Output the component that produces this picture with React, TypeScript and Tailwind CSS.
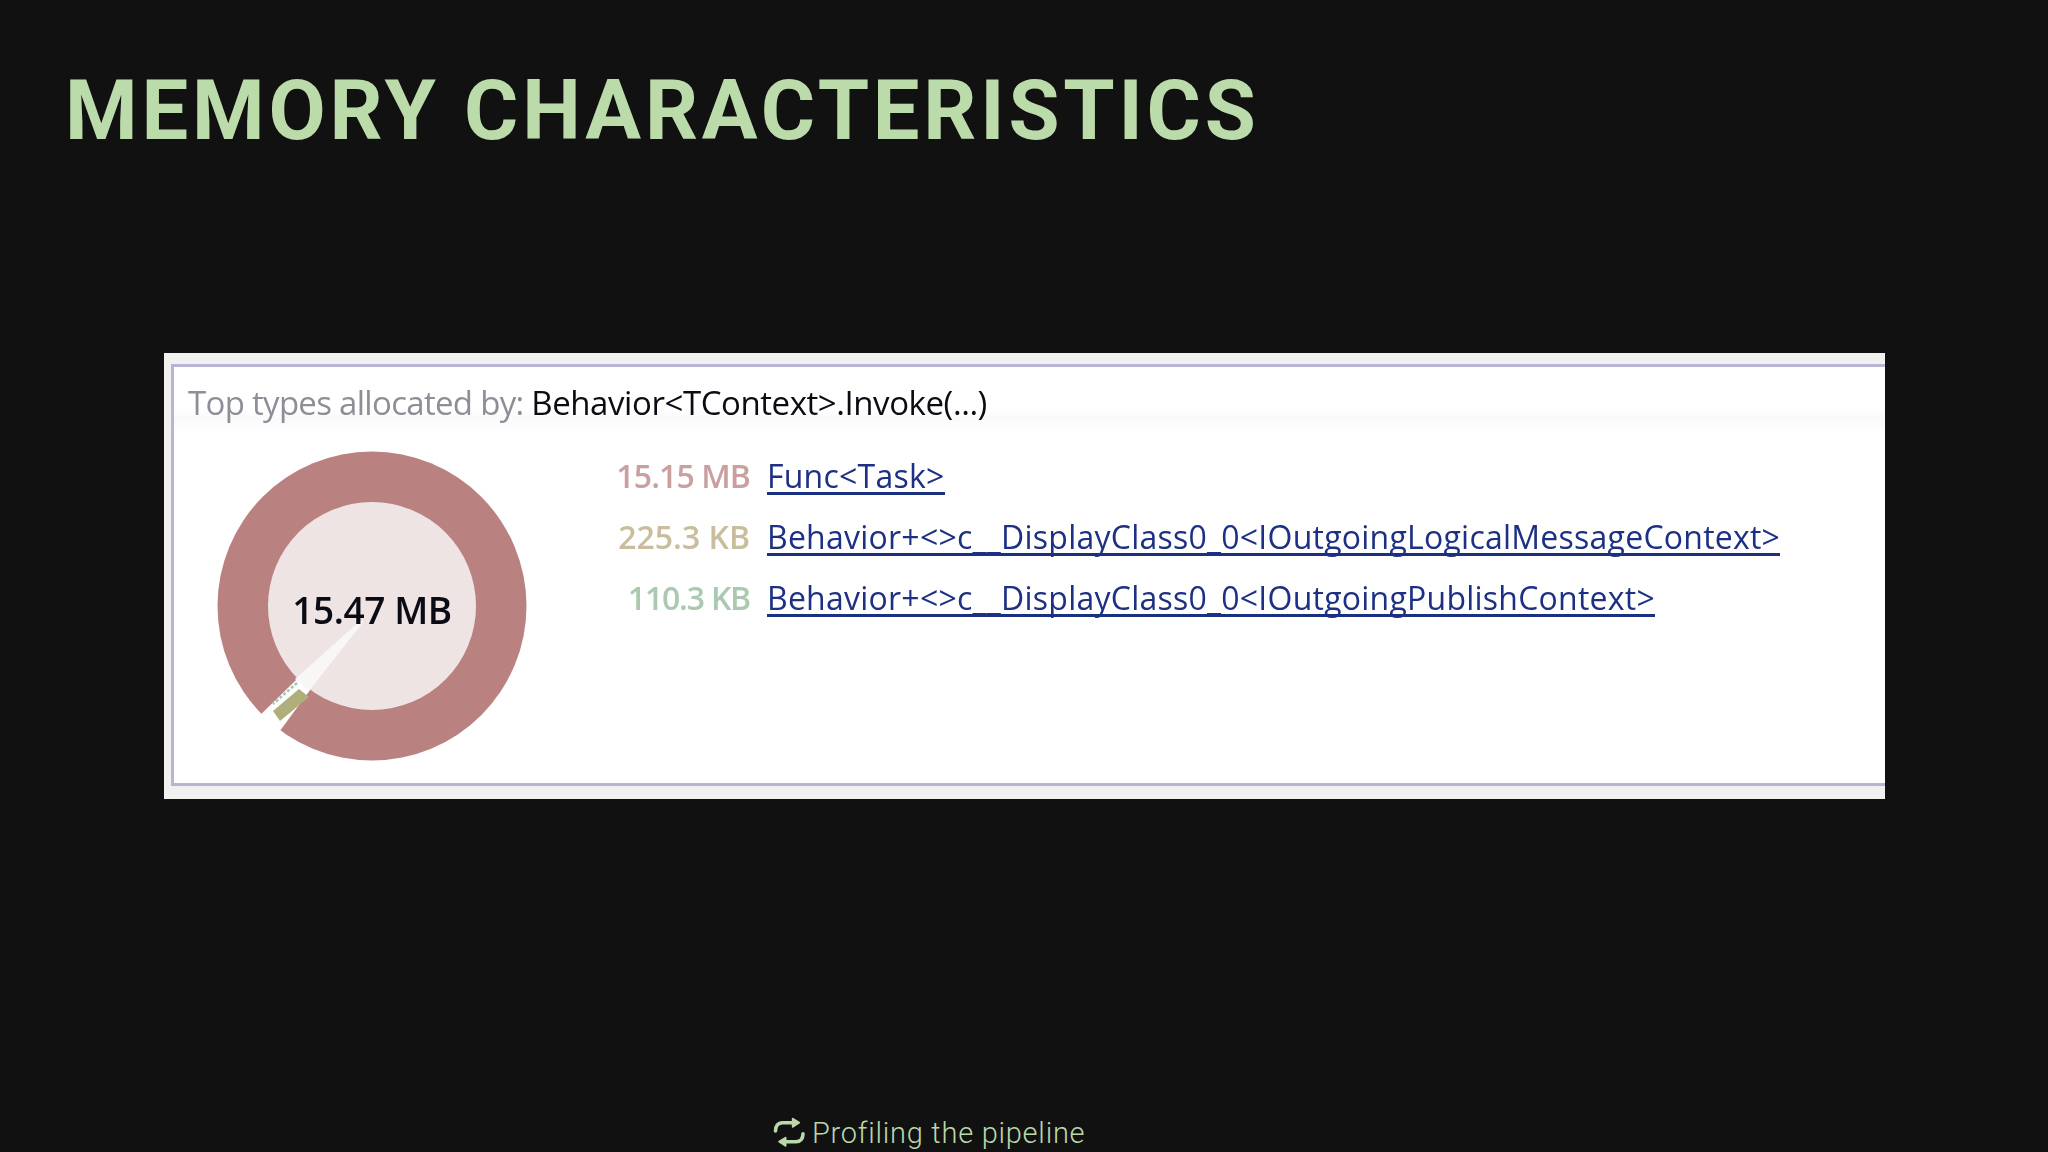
const rows = [
  { size: "15.15 MB", color: "text-[#c99f9f] tracking-[-0.9px]", name: "Func<Task>" },
  { size: "225.3 KB", color: "text-[#c9bd9e] tracking-[0px]", name: "Behavior+<>c__DisplayClass0_0<IOutgoingLogicalMessageContext>" },
  { size: "110.3 KB", color: "text-[#abc8b0] tracking-[-1.2px]", name: "Behavior+<>c__DisplayClass0_0<IOutgoingPublishContext>" },
];

function Donut() {
  return (
    <div className="relative h-[310px] w-[310px] shrink-0">
      <svg viewBox="0 0 310 310" className="h-full w-full">
        <circle cx="155" cy="155" r="154.5" fill="#b98281" />
        <path d="M155 155 L36 271 L54 292 Z" fill="#ffffff" />
        <path d="M92 246 L82 238 L56 260 L63 270 Z" fill="#b0ae7a" />
        <path d="M80 232 L56 253" stroke="#9cc9b0" strokeWidth="2.5" strokeDasharray="3 2" />
        <circle cx="155" cy="155" r="104" fill="#eee4e4" />
        <path d="M143 170 L78 228 L92 240 L147 170 Z" fill="#f9f7f5" />
      </svg>
      <span className="absolute inset-x-0 top-[134px] text-center font-['Open_Sans'] text-[37px] font-semibold leading-[50px] tracking-[-0.4px] text-[#0b0b14]">
        15.47 MB
      </span>
    </div>
  );
}

function RetweetIcon() {
  return (
    <svg viewBox="0 0 32 32" className="h-[32px] w-[32px] shrink-0" fill="none" stroke="currentColor" strokeWidth="3.6" strokeLinecap="round" strokeLinejoin="round">
      <path d="M2.5 14 C2.5 9 5 5.7 9.5 5.7 H21" />
      <path d="M19.8 1.8 L26 5.7 L19.8 9.6 Z" fill="currentColor" strokeWidth="2" />
      <path d="M30 16.7 C30 21.5 27.5 24.7 23 24.7 H11.5" />
      <path d="M12.5 20.8 L6.3 24.7 L12.5 28.6 Z" fill="currentColor" strokeWidth="2" />
    </svg>
  );
}

export default function App() {
  return (
    <div className="flex h-[1152px] w-[2048px] flex-col items-start overflow-hidden bg-[#111111] font-['Roboto',sans-serif]">
      <h1 className="ml-[65px] mt-[63px] text-[83px] font-bold leading-[96px] tracking-[3.8px] text-[#bcdbaa]">
        MEMORY CHARACTERISTICS
      </h1>

      <section className="ml-[164px] mt-[194px] h-[446px] w-[1721px] bg-[#f1f1ef] pb-[13px] pl-[7px] pt-[11px] blur-[0.5px]">
        <div className="flex h-full flex-col border-y-[3px] border-l-[3px] border-[#b8b4d4] bg-white font-['Open_Sans',sans-serif]">
          <div className="h-[64px] bg-gradient-to-b from-white from-[65%] via-[#f8f9fa] via-[80%] to-white pl-[14px] pt-[14px] text-[33px] leading-[44px] tracking-[-0.7px] text-[#8e8e98]">
            Top types allocated by: <span className="tracking-[-0.43px] text-[#0b0b14]">Behavior&lt;TContext&gt;.Invoke(...)</span>
          </div>
          <div className="flex items-start pl-[43px] pt-[20px]">
            <Donut />
            <div className="ml-[73px] mt-[8px] grid grid-cols-[150px_auto] gap-x-[17px] gap-y-[25px] text-[32px] leading-[33px]">
              {rows.map((r) => (
                <div key={r.size} className="contents">
                  <span className={`text-right font-semibold ${r.color}`}>{r.size}</span>
                  <span className="w-fit border-b-[3px] border-[#1c3080] tracking-[0.24px] text-[#1d3083]">{r.name}</span>
                </div>
              ))}
            </div>
          </div>
        </div>
      </section>

      <footer className="ml-[773px] mt-[316px] flex items-center gap-[7px] text-[#bad8a9]">
        <RetweetIcon />
        <span className="text-[29px] font-light leading-[36px] tracking-[0.75px]">Profiling the pipeline</span>
      </footer>
    </div>
  );
}
